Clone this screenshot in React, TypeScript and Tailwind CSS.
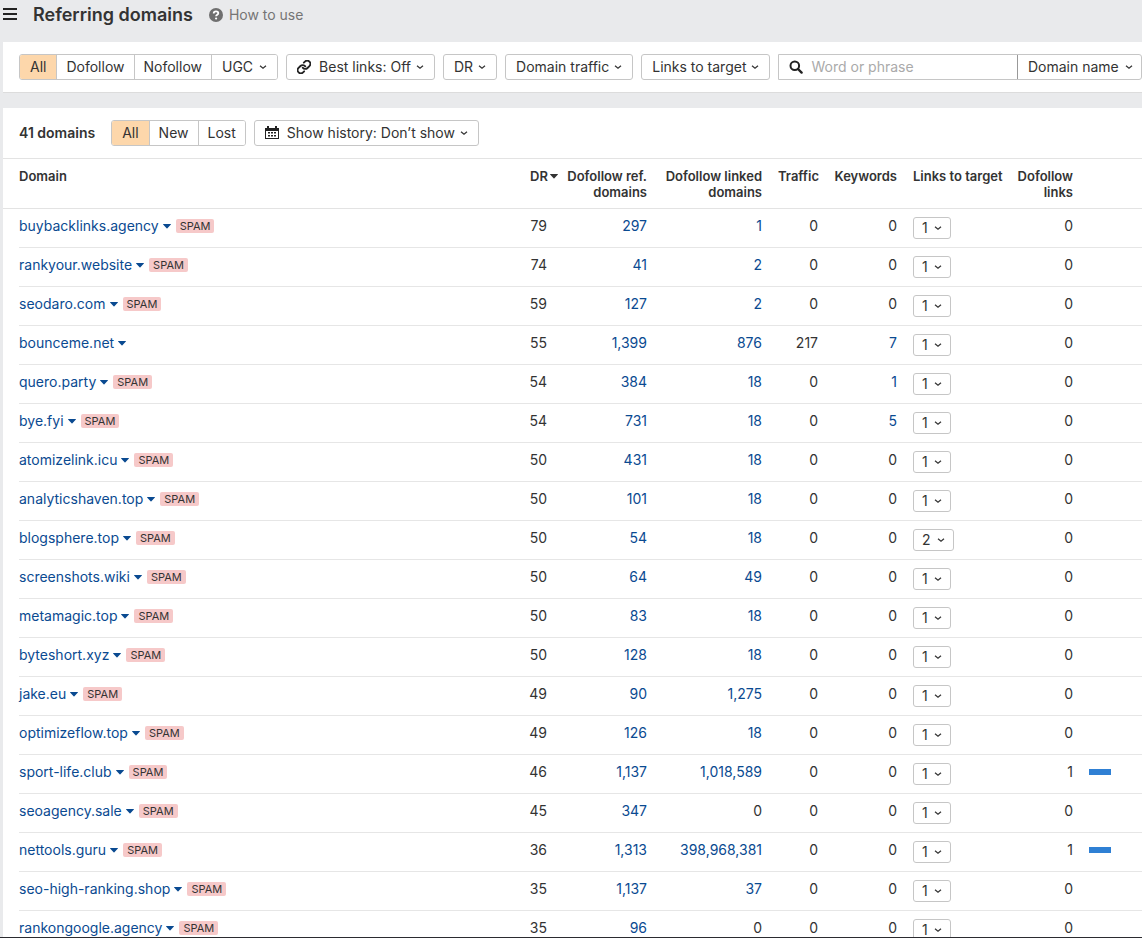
import type { ReactNode } from "react";

interface DomainRow {
  domain: string;
  spam: boolean;
  dr: number;
  refDomains: string;
  linkedDomains: string;
  traffic: string;
  keywords: string;
  links: number;
  dofollow: number;
}

const row = (
  domain: string,
  dr: number,
  refDomains: string,
  linkedDomains: string,
  rest: Partial<DomainRow> = {},
): DomainRow => ({
  domain,
  dr,
  refDomains,
  linkedDomains,
  spam: true,
  traffic: "0",
  keywords: "0",
  links: 1,
  dofollow: 0,
  ...rest,
});

const rows: DomainRow[] = [
  row("buybacklinks.agency", 79, "297", "1"),
  row("rankyour.website", 74, "41", "2"),
  row("seodaro.com", 59, "127", "2"),
  row("bounceme.net", 55, "1,399", "876", { spam: false, traffic: "217", keywords: "7" }),
  row("quero.party", 54, "384", "18", { keywords: "1" }),
  row("bye.fyi", 54, "731", "18", { keywords: "5" }),
  row("atomizelink.icu", 50, "431", "18"),
  row("analyticshaven.top", 50, "101", "18"),
  row("blogsphere.top", 50, "54", "18", { links: 2 }),
  row("screenshots.wiki", 50, "64", "49"),
  row("metamagic.top", 50, "83", "18"),
  row("byteshort.xyz", 50, "128", "18"),
  row("jake.eu", 49, "90", "1,275"),
  row("optimizeflow.top", 49, "126", "18"),
  row("sport-life.club", 46, "1,137", "1,018,589", { dofollow: 1 }),
  row("seoagency.sale", 45, "347", "0"),
  row("nettools.guru", 36, "1,313", "398,968,381", { dofollow: 1 }),
  row("seo-high-ranking.shop", 35, "1,137", "37"),
  row("rankongoogle.agency", 35, "96", "0"),
];

function Chevron() {
  return (
    <svg className="w-2 h-2 shrink-0" viewBox="0 0 8 8" fill="none" stroke="currentColor" strokeWidth="1.2" aria-hidden="true">
      <path d="M1 2.7 4 5.3 7 2.7" />
    </svg>
  );
}

function Caret() {
  return (
    <svg className="w-2 h-2 shrink-0" viewBox="0 0 8 8" fill="currentColor" aria-hidden="true">
      <path d="M0.3 2h7.4a.3.3 0 0 1 .2.5L4.4 6.300a.5.5 0 0 1-.8 0L.1 2.500A.3.3 0 0 1 .3 2z" />
    </svg>
  );
}

function LinkIcon() {
  return (
    <svg className="w-[14px] h-[14px] shrink-0" viewBox="1 1 22 22" fill="none" stroke="#222" strokeWidth="2.900" strokeLinecap="round" aria-hidden="true">
      <path d="M10 13a5 5 0 0 0 7.540.54l3-3a5 5 0 0 0-7.070-7.070l-1.720 1.710" />
      <path d="M14 11a5 5 0 0 0-7.540-.54l-3 3a5 5 0 0 0 7.070 7.070l1.710-1.710" />
    </svg>
  );
}

function CalendarIcon() {
  return (
    <svg className="w-[14px] h-[14px] shrink-0" viewBox="0 0 14 14" fill="#222" aria-hidden="true">
      <path fillRule="evenodd" d="M0 2h2V0h2v2h6V0h2v2h2v11H0zM1 5v7h12V5z" />
      <path d="M3 6h2v1.500H3zM6 6h2v1.500H6zM9 6h2v1.500H9zM3 9h2v1.500H3zM6 9h2v1.500H6zM9 9h2v1.500H9z" />
    </svg>
  );
}

function SearchIcon() {
  return (
    <svg className="w-[14px] h-[14px] shrink-0" viewBox="0 0 14 14" fill="none" stroke="#222" aria-hidden="true">
      <circle cx="5.800" cy="5.800" r="4.300" strokeWidth="2" />
      <path d="M9 9l3.600 3.600" strokeWidth="2.400" strokeLinecap="round" />
    </svg>
  );
}

function DropButton({ icon, children }: { icon?: ReactNode; children: ReactNode }) {
  return (
    <button type="button" className="flex items-center h-[26px] px-[10px] bg-white border border-[#c6c6c6] rounded-[3px] whitespace-nowrap">
      {icon && <span className="mr-2">{icon}</span>}
      {children}
      <span className="ml-[5px]">
        <Chevron />
      </span>
    </button>
  );
}

function ButtonGroup({ items, menu }: { items: string[]; menu?: string }) {
  return (
    <div className="flex h-[26px] border border-[#c6c6c6] rounded-[3px] overflow-hidden divide-x divide-[#c6c6c6]">
      {items.map((item, i) => (
        <button key={item} type="button" aria-pressed={i === 0} className={i === 0 ? "px-[10px] bg-[#fdd7ab]" : "px-[9px] bg-white"}>
          {item}
        </button>
      ))}
      {menu && (
        <button type="button" className="flex items-center gap-[6px] px-[10px] bg-white">
          {menu}
          <Chevron />
        </button>
      )}
    </div>
  );
}

function Count({ value }: { value: string }) {
  if (value === "0") return <>0</>;
  return <a href="#" className="text-[#0a4a91]">{value}</a>;
}

const numCell = "px-2 pt-[7px] text-right border-b border-[#e6e6e6]";
const headCell = "px-2 pt-[9px] text-right";

export default function App() {
  return (
    <div className="h-screen overflow-hidden flex flex-col bg-[#e9eaec] border-b border-[#2b2b30] font-['Inter',sans-serif] text-[14px] leading-5 text-[#333]">
      <header className="flex items-center h-[42px] pb-3 pl-[3px] shrink-0">
        <button type="button" aria-label="Menu" className="mr-4">
          <svg className="w-[14px] h-[14px]" viewBox="0 0 14 14" fill="#222" aria-hidden="true">
            <path d="M0 0h14v2H0zM0 5h14v2H0zM0 10h14v2H0z" />
          </svg>
        </button>
        <h1 className="text-[18px] font-semibold leading-6">Referring domains</h1>
        <a href="#" className="flex items-center gap-[6px] ml-4 text-[#757575]">
          <svg className="w-[14px] h-[14px]" viewBox="0 0 14 14" aria-hidden="true">
            <circle cx="7" cy="7" r="7" fill="#6f6f6f" />
            <path d="M4.700 5.500c0-1.400 1-2.100 2.300-2.100s2.300.8 2.300 1.900c0 1.500-2.200 1.400-2.200 3" fill="none" stroke="#fff" strokeWidth="1.800" />
            <circle cx="7.100" cy="10.500" r="1.100" fill="#fff" />
          </svg>
          How to use
        </a>
      </header>

      <section className="flex gap-2 ml-[3px] pl-4 py-3 bg-white shrink-0 border-b border-[#dcdcdc]">
        <ButtonGroup items={["All", "Dofollow", "Nofollow"]} menu="UGC" />
        <DropButton icon={<LinkIcon />}>Best links: Off</DropButton>
        <DropButton>DR</DropButton>
        <DropButton>Domain traffic</DropButton>
        <DropButton>Links to target</DropButton>
        <form className="flex flex-1 h-[26px] min-w-0 border border-[#c6c6c6] rounded-r-[3px]">
          <label className="flex flex-1 min-w-0 items-center gap-2 pl-[10px]">
            <SearchIcon />
            <input type="text" aria-label="Word or phrase" placeholder="Word or phrase" className="w-full min-w-0 bg-transparent outline-none placeholder:text-[#aaa]" />
          </label>
          <label className="grid items-center border-l border-[#999]">
            <select aria-label="Search in" className="col-start-1 row-start-1 appearance-none bg-transparent pl-[10px] pr-[22px] outline-none">
              <option>Domain name</option>
            </select>
            <span className="col-start-1 row-start-1 justify-self-end mr-2 pointer-events-none">
              <Chevron />
            </span>
          </label>
        </form>
      </section>

      <main className="flex-1 min-h-0 overflow-hidden mt-[15px] ml-[3px] bg-white">
        <div className="flex items-center gap-2 pl-4 py-3">
          <h2 className="mr-2 font-semibold">41 domains</h2>
          <ButtonGroup items={["All", "New", "Lost"]} />
          <DropButton icon={<CalendarIcon />}>Show history: Don’t show</DropButton>
        </div>

        <table className="w-full table-fixed border-separate border-spacing-0">
          <colgroup>
            <col />
            <col className="w-[38px]" />
            <col className="w-[97px]" />
            <col className="w-[115px]" />
            <col className="w-[56px]" />
            <col className="w-[79px]" />
            <col className="w-[104px]" />
            <col className="w-[72px]" />
            <col className="w-[61px]" />
          </colgroup>
          <thead>
            <tr className="h-[51px] align-top text-[13px] leading-4 whitespace-nowrap [&>th]:border-y [&>th]:border-[#e3e3e3] [&>th]:font-semibold">
              <th className="pl-4 pt-[9px] text-left">Domain</th>
              <th className="pt-[9px]" aria-sort="descending">
                <button type="button" className="flex items-center gap-[2px] pl-[10px] leading-4">
                  DR
                  <Caret />
                </button>
              </th>
              <th className={headCell}>Dofollow ref.<br />domains</th>
              <th className={headCell}>Dofollow linked<br />domains</th>
              <th className={headCell}>Traffic</th>
              <th className={headCell}>Keywords</th>
              <th className="px-2 pt-[9px] text-left">Links to target</th>
              <th className={headCell}>Dofollow<br />links</th>
              <th />
            </tr>
          </thead>
          <tbody>
            {rows.map((r) => (
              <tr key={r.domain} className="h-[39px] align-top">
                <td className="pl-4">
                  <div className="flex items-start h-[39px] pt-[7px] border-b border-[#e6e6e6]">
                    <a href="#" className="flex items-center gap-1 text-[#0a4a91]">
                      {r.domain}
                      <Caret />
                    </a>
                    {r.spam && (
                      <span className="ml-[5px] mt-[3px] px-1 rounded-[2px] bg-[#f6c9c9] text-[11px] leading-[14px]">SPAM</span>
                    )}
                  </div>
                </td>
                <td className="pr-[11px] pt-[7px] text-right border-b border-[#e6e6e6]">{r.dr}</td>
                <td className={numCell}><Count value={r.refDomains} /></td>
                <td className={numCell}><Count value={r.linkedDomains} /></td>
                <td className={numCell}>{r.traffic}</td>
                <td className={numCell}><Count value={r.keywords} /></td>
                <td className="px-2 pt-2 border-b border-[#e6e6e6]">
                  <button type="button" className="flex items-center gap-[6px] h-[22px] px-2 border border-[#c6c6c6] rounded-[3px]">
                    {r.links}
                    <Chevron />
                  </button>
                </td>
                <td className={numCell}>{r.dofollow}</td>
                <td className="pl-2 pt-[14px] border-b border-[#e6e6e6]">
                  {r.dofollow > 0 && <div className="w-[22px] h-[6px] bg-[#2f80d4]" />}
                </td>
              </tr>
            ))}
          </tbody>
        </table>
      </main>
    </div>
  );
}
